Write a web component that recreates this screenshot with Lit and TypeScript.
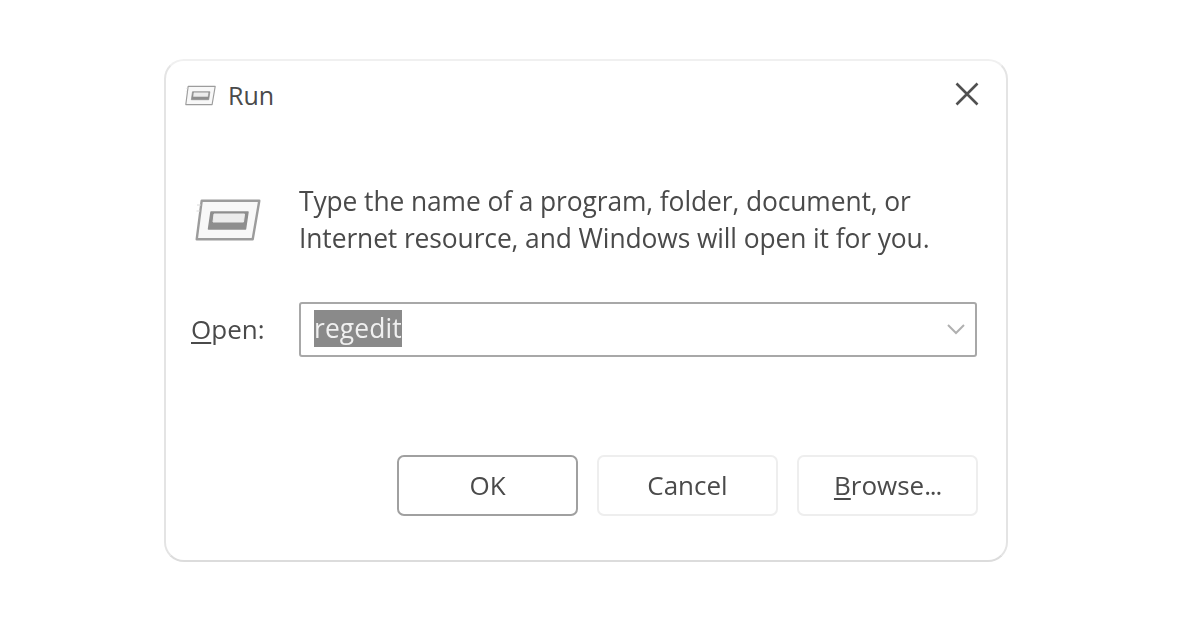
import { LitElement, css, html, svg } from 'lit'
import { customElement } from 'lit/decorators.js'

const runIcon = svg`
  <path d="M6.7 2.7 H64.3 L57.7 41.3 H1.7 Z" fill="#f8f8f8" stroke="#9c9c9c" stroke-width="2.4" stroke-linejoin="round"/>
  <path d="M2 7 H6 M1.5 13 H5" stroke="#d8d8d8" stroke-width="1"/>
  <path d="M16 14 H53 L50.5 31 H13.5 Z" fill="#8e8e8e" stroke="#8e8e8e" stroke-width="1.5" stroke-linejoin="round"/>
  <path d="M19 16 H49.5 L48.5 24 H18 Z" fill="#ececec" stroke="#ececec" stroke-linejoin="round"/>
`

@customElement('app-root')
export class AppRoot extends LitElement {
  static styles = css`
    :host {
      display: block;
      width: 1200px;
      height: 628px;
      background: #fff;
      padding: 59px 0 0 164px;
      box-sizing: border-box;
      font-family: 'Open Sans', 'Noto Sans', sans-serif;
      color: #4a4a4a;
    }
    .dialog {
      width: 844px;
      height: 503px;
      box-sizing: border-box;
      border: 2px solid #e4e4e4;
      border-top-color: #f0f0f0;
      border-bottom-color: #dcdcdc;
      border-radius: 20px;
      background: #fff;
      filter: blur(0.7px);
      display: flex;
      flex-direction: column;
    }
    .title {
      display: flex;
      align-items: center;
      height: 68px;
      padding: 0 26px 0 19px;
      font-size: 25px;
      flex: none;
    }
    .title svg.small {
      width: 31px;
      height: 21px;
      margin-right: 12px;
    }
    .title .close {
      margin: 0 0 2px auto;
      width: 26px;
      height: 26px;
    }
    .message {
      display: flex;
      margin-top: 54px;
      padding-left: 29px;
      height: 100px;
    }
    .message svg {
      width: 66px;
      height: 44px;
      margin: 15px 38px 0 0;
      flex: none;
    }
    .message p {
      margin: 0;
      font-size: 26.4px;
      line-height: 37px;
      letter-spacing: -0.1px;
      white-space: nowrap;
    }
    .open {
      display: flex;
      align-items: center;
      margin-top: 19px;
      padding-left: 25px;
    }
    .open label {
      width: 108px;
      font-size: 26px;
      padding-bottom: 2px;
    }
    u {
      text-underline-offset: 3px;
    }
    .field {
      width: 678px;
      height: 55px;
      box-sizing: border-box;
      border: 2px solid #a8a8a8;
      border-radius: 3px;
      display: flex;
      align-items: center;
      padding: 0 9px 0 13px;
    }
    .selected {
      background: #8a8a8a;
      color: #f0f0f0;
      font-size: 26.4px;
      line-height: 37px;
      height: 37px;
      margin-bottom: 3px;
      letter-spacing: 0.1px;
    }
    .field svg {
      margin: 0 0 1px auto;
      width: 20px;
      height: 12px;
    }
    .actions {
      display: flex;
      gap: 19px;
      margin-top: 98px;
      padding-left: 231px;
    }
    .btn {
      width: 181px;
      height: 61px;
      box-sizing: border-box;
      border: 2px solid #eeeeee;
      border-radius: 7px;
      background: #fff;
      display: flex;
      align-items: center;
      justify-content: center;
      padding-bottom: 2px;
      font-size: 26px;
    }
    .btn.primary {
      border-color: #a0a0a0;
    }
    .dots {
      letter-spacing: -1.2px;
    }
  `

  render() {
    return html`
      <div class="dialog">
        <div class="title">
          <svg class="small" viewBox="0 0 66 44">${runIcon}</svg>
          Run
          <svg class="close" viewBox="0 0 26 26">
            <path d="M2.5 2.5 L23.5 23.5 M23.5 2.5 L2.5 23.5" stroke="#505050" stroke-width="2.6" fill="none"/>
          </svg>
        </div>
        <div class="message">
          <svg viewBox="0 0 66 44">${runIcon}</svg>
          <p>Type the name of a program, folder, document, or<br />Internet resource, and Windows will open it for you.</p>
        </div>
        <div class="open">
          <label><u>O</u>pen:</label>
          <div class="field">
            <span class="selected">regedit</span>
            <svg viewBox="0 0 20 12">
              <path d="M2 2 L10 10 L18 2" stroke="#b0b0b0" stroke-width="2" fill="none"/>
            </svg>
          </div>
        </div>
        <div class="actions">
          <div class="btn primary">OK</div>
          <div class="btn">Cancel</div>
          <div class="btn"><span><u>B</u>rowse<span class="dots">...</span></span></div>
        </div>
      </div>
    `
  }
}
